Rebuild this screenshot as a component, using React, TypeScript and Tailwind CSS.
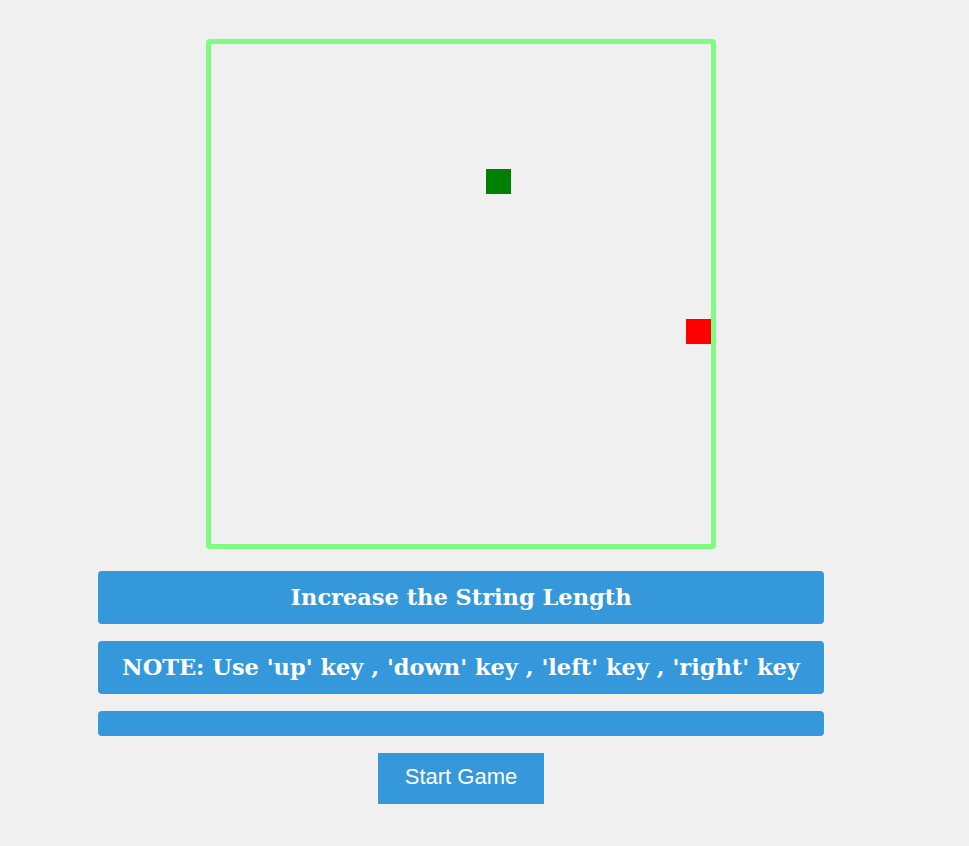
import React from "react";

export default function App() {
  const serif = { fontFamily: '"DejaVu Serif", Georgia, serif' };
  return (
    <div className="min-h-[846px] w-full bg-[#f0f0f0]">
      <div className="flex w-[922px] flex-col items-center pt-[39px]">
        <div className="relative h-[510px] w-[510px] rounded-[4px] border-[5px] border-[#7ffb7f]">
          <div className="absolute left-[275px] top-[125px] h-[25px] w-[25px] bg-[#008000]" />
          <div className="absolute left-[475px] top-[275px] h-[25px] w-[25px] bg-[#ff0000]" />
        </div>
        <div
          className="mt-[22px] flex h-[53px] w-[726px] items-center justify-center rounded-[4px] bg-[#3498db] text-[22.5px] font-bold text-white"
          style={serif}
        >
          Increase the String Length
        </div>
        <div
          className="mt-[17px] flex h-[53px] w-[726px] items-center justify-center rounded-[4px] bg-[#3498db] text-[22.5px] font-bold text-white"
          style={serif}
        >
          NOTE: Use 'up' key , 'down' key , 'left' key , 'right' key
        </div>
        <div className="mt-[17px] h-[25px] w-[726px] rounded-[4px] bg-[#3498db]" />
        <button
          className="mt-[17px] flex h-[51px] w-[166px] items-center justify-center bg-[#3498db] pb-[4px] text-[22px] text-white"
          style={{ fontFamily: '"Liberation Sans", Arial, sans-serif' }}
        >
          Start Game
        </button>
      </div>
    </div>
  );
}
